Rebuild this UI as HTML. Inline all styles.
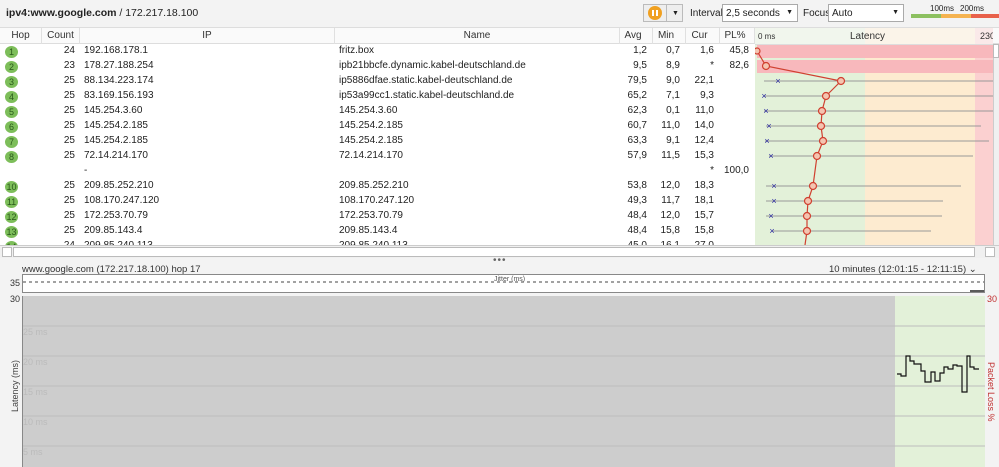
<!DOCTYPE html>
<html><head><meta charset="utf-8"><style>
*{margin:0;padding:0;box-sizing:border-box}
body{width:999px;height:467px;overflow:hidden;background:#fff;font-family:"Liberation Sans",sans-serif;font-size:10px;color:#222;position:relative}
.a{position:absolute;white-space:nowrap}
.r{text-align:right}
.hop{position:absolute;left:5px;width:13px;height:12px;border-radius:50%;background:#7dbe5a;color:#2a5a1a;font-size:9px;text-align:center;line-height:12px}
.hd{position:absolute;top:28px;height:16px;line-height:16px;border-right:1px solid #e0e0e0;text-align:center;color:#333}
</style></head><body>
<!-- toolbar -->
<div class="a" style="left:0;top:0;width:999px;height:28px;background:#f3f3f3;border-bottom:1px solid #ddd"></div>
<div class="a" style="left:6px;top:7px;font-size:10.5px"><b>ipv4:www.google.com</b> / 172.217.18.100</div>
<div class="a" style="left:643px;top:4px;width:40px;height:18px;border:1px solid #bbb;background:#eee"></div>
<div class="a" style="left:648px;top:6px;width:14px;height:14px;border-radius:50%;background:#f0a020"></div>
<div class="a" style="left:652px;top:10px;width:2px;height:6px;background:#fff"></div>
<div class="a" style="left:656px;top:10px;width:2px;height:6px;background:#fff"></div>
<div class="a" style="left:666px;top:5px;width:1px;height:16px;background:#bbb"></div>
<div class="a" style="left:672px;top:10px;font-size:7px">▼</div>
<div class="a" style="left:690px;top:8px">Interval</div>
<div class="a" style="left:722px;top:4px;width:76px;height:18px;border:1px solid #aaa;background:#fff;padding:3px 3px">2,5 seconds<span style="position:absolute;right:4px;top:4px;font-size:7px">▼</span></div>
<div class="a" style="left:803px;top:8px">Focus</div>
<div class="a" style="left:828px;top:4px;width:76px;height:18px;border:1px solid #aaa;background:#fff;padding:3px 3px">Auto<span style="position:absolute;right:4px;top:4px;font-size:7px">▼</span></div>
<div class="a" style="left:930px;top:4px;font-size:8px">100ms</div>
<div class="a" style="left:960px;top:4px;font-size:8px">200ms</div>
<div class="a" style="left:911px;top:14px;width:30px;height:4px;background:#8cc060"></div>
<div class="a" style="left:941px;top:14px;width:30px;height:4px;background:#f5b350"></div>
<div class="a" style="left:971px;top:14px;width:28px;height:4px;background:#e8604a"></div>
<!-- header -->
<div class="a" style="left:0;top:28px;width:999px;height:16px;background:#fafafa;border-bottom:1px solid #ddd"></div>
<div class="hd" style="left:0;width:42px">Hop</div>
<div class="hd" style="left:42px;width:38px">Count</div>
<div class="hd" style="left:80px;width:255px">IP</div>
<div class="hd" style="left:335px;width:285px">Name</div>
<div class="hd r" style="left:620px;width:33px;padding-right:6px">Avg</div>
<div class="hd r" style="left:653px;width:33px;padding-right:6px">Min</div>
<div class="hd r" style="left:686px;width:34px;padding-right:6px">Cur</div>
<div class="hd r" style="left:720px;width:35px;padding-right:4px">PL%</div>
<svg class="a" style="left:755px;top:28px" width="238" height="217">
<rect x="0" y="0" width="110" height="217" fill="#e3f1d9"/>
<rect x="110" y="0" width="110" height="217" fill="#fdebd0"/>
<rect x="220" y="0" width="18" height="217" fill="#fbd0d0"/>
<rect x="0" y="0" width="238" height="16" fill="#fafafa" opacity=".6"/>
<rect x="0" y="16" width="238" height="1" fill="#ddd"/>
<rect x="2" y="17" width="236" height="13" fill="#f8b8bc"/>
<rect x="2" y="32" width="236" height="13" fill="#f8b8bc"/>
<text x="3" y="11" font-size="8" fill="#333" font-family="Liberation Sans">0 ms</text>
<text x="95" y="11" font-size="10" fill="#333" font-family="Liberation Sans">Latency</text>
<text x="225" y="11" font-size="9" fill="#333" font-family="Liberation Sans">230</text>
<g stroke="#999" stroke-width="1">
<line x1="9" y1="53" x2="238" y2="53"/><line x1="9" y1="68" x2="238" y2="68"/>
<line x1="9" y1="83" x2="238" y2="83"/><line x1="11" y1="98" x2="226" y2="98"/>
<line x1="10" y1="113" x2="234" y2="113"/><line x1="14" y1="128" x2="218" y2="128"/>
<line x1="11" y1="158" x2="206" y2="158"/><line x1="11" y1="173" x2="188" y2="173"/>
<line x1="11" y1="188" x2="187" y2="188"/><line x1="17" y1="203" x2="176" y2="203"/>
</g>
<g fill="#2a2aa0" font-size="9" font-family="Liberation Sans" text-anchor="middle">
<text x="23" y="56">×</text><text x="9" y="71">×</text><text x="11" y="86">×</text><text x="14" y="101">×</text><text x="12" y="116">×</text><text x="16" y="131">×</text><text x="19" y="161">×</text><text x="19" y="176">×</text><text x="16" y="191">×</text><text x="17" y="206">×</text>
</g>
<polyline fill="none" stroke="#d04030" stroke-width="1.2" points="2,23 11,38 86,53 71,68 67,83 66,98 68,113 62,128 58,158 53,173 52,188 52,203 50,217"/>
<g fill="#f4c4b0" stroke="#d04030" stroke-width="1.2">
<circle cx="2" cy="23" r="3"/><circle cx="11" cy="38" r="3.5"/><circle cx="86" cy="53" r="3.5"/><circle cx="71" cy="68" r="3.5"/><circle cx="67" cy="83" r="3.5"/><circle cx="66" cy="98" r="3.5"/><circle cx="68" cy="113" r="3.5"/><circle cx="62" cy="128" r="3.5"/><circle cx="58" cy="158" r="3.5"/><circle cx="53" cy="173" r="3.5"/><circle cx="52" cy="188" r="3.5"/><circle cx="52" cy="203" r="3.5"/>
</g>
</svg>
<div class="a" style="left:993px;top:44px;width:6px;height:201px;background:#f0f0f0;border-left:1px solid #ccc"></div>
<div class="a" style="left:993px;top:44px;width:6px;height:14px;background:#fff;border:1px solid #bbb"></div>

<div id="rows"></div>
<!-- h scrollbar -->
<div class="a" style="left:0;top:245px;width:999px;height:13px;background:#f0f0f0;border-top:1px solid #ccc"></div>
<div class="a" style="left:2px;top:247px;width:10px;height:10px;border:1px solid #bbb;background:#fff"></div>
<div class="a" style="left:13px;top:247px;width:962px;height:10px;border:1px solid #bbb;background:#fff"></div>
<div class="a" style="left:985px;top:247px;width:10px;height:10px;border:1px solid #bbb;background:#fff"></div>
<!-- lower panel -->
<div class="a" style="left:0;top:258px;width:999px;height:209px;background:#f3f3f3"></div>
<div class="a" style="left:493px;top:255px;font-size:10px;color:#666;letter-spacing:1px">•••</div>
<div class="a" style="left:22px;top:264px;font-size:9.5px;color:#333">www.google.com (172.217.18.100) hop 17</div>
<div class="a" style="left:829px;top:264px;font-size:9.5px;color:#333">10 minutes (12:01:15 - 12:11:15) ⌄</div>
<svg class="a" style="left:0;top:272px" width="999" height="195">
<rect x="22.5" y="2.5" width="962" height="18" fill="#fff" stroke="#888"/>
<line x1="23" y1="10" x2="984" y2="10" stroke="#444" stroke-dasharray="3,3"/>
<line x1="970" y1="19" x2="984" y2="19" stroke="#222" stroke-width="1.5"/>
<text x="494" y="9" font-size="7" fill="#555" font-family="Liberation Sans">Jitter (ms)</text>
<text x="10" y="14" font-size="9" fill="#333" font-family="Liberation Sans">35</text>
<text x="10" y="30" font-size="9" fill="#333" font-family="Liberation Sans">30</text>
<text x="987" y="30" font-size="9" fill="#c03030" font-family="Liberation Sans">30</text>
<rect x="23" y="24" width="872" height="171" fill="#cdcdcd"/>
<rect x="895" y="24" width="90" height="171" fill="#e3f1d9"/>
<line x1="22.5" y1="24" x2="22.5" y2="195" stroke="#888"/>
<g stroke="#bdbdbd"><line x1="23" y1="54" x2="985" y2="54"/><line x1="23" y1="84" x2="985" y2="84"/><line x1="23" y1="114" x2="985" y2="114"/><line x1="23" y1="144" x2="985" y2="144"/><line x1="23" y1="174" x2="985" y2="174"/></g>
<g font-size="9" fill="#bbb" font-family="Liberation Sans"><text x="23" y="63">25 ms</text><text x="23" y="93">20 ms</text><text x="23" y="123">15 ms</text><text x="23" y="153">10 ms</text><text x="23" y="183">5 ms</text></g>
<polyline fill="none" stroke="#111" stroke-width="1.2" points="897,102 901,102 901,104 906,104 906,84 910,84 910,89 914,89 914,92 921,92 921,99 925,99 925,110 931,110 931,100 935,100 935,109 940,109 940,101 944,101 944,95 948,95 948,97 953,97 953,93 957,93 957,94 962,94 962,120 967,120 967,84 970,84 970,95 974,95 974,97 979,97"/>
<text transform="translate(18,140) rotate(-90)" font-size="9" fill="#444" font-family="Liberation Sans">Latency (ms)</text>
<text transform="translate(988,90) rotate(90)" font-size="9" fill="#c03030" font-family="Liberation Sans">Packet Loss %</text>
</svg>
<script>
var R=[[1,24,"192.168.178.1","fritz.box","1,2","0,7","1,6","45,8"],
[2,23,"178.27.188.254","ipb21bbcfe.dynamic.kabel-deutschland.de","9,5","8,9","*","82,6"],
[3,25,"88.134.223.174","ip5886dfae.static.kabel-deutschland.de","79,5","9,0","22,1",""],
[4,25,"83.169.156.193","ip53a99cc1.static.kabel-deutschland.de","65,2","7,1","9,3",""],
[5,25,"145.254.3.60","145.254.3.60","62,3","0,1","11,0",""],
[6,25,"145.254.2.185","145.254.2.185","60,7","11,0","14,0",""],
[7,25,"145.254.2.185","145.254.2.185","63,3","9,1","12,4",""],
[8,25,"72.14.214.170","72.14.214.170","57,9","11,5","15,3",""],
[0,"","-","","","","*","100,0"],
[10,25,"209.85.252.210","209.85.252.210","53,8","12,0","18,3",""],
[11,25,"108.170.247.120","108.170.247.120","49,3","11,7","18,1",""],
[12,25,"172.253.70.79","172.253.70.79","48,4","12,0","15,7",""],
[13,25,"209.85.143.4","209.85.143.4","48,4","15,8","15,8",""],
[14,24,"209.85.240.113","209.85.240.113","45,0","16,1","27,0",""]];
var h="";
R.forEach(function(r,i){var y=45+i*15;
if(r[0])h+='<div class="hop" style="top:'+(y+1)+'px">'+r[0]+'</div>';
h+='<div class="a r" style="left:42px;width:33px;top:'+y+'px">'+r[1]+'</div>';
h+='<div class="a" style="left:84px;top:'+y+'px">'+r[2]+'</div>';
h+='<div class="a" style="left:339px;top:'+y+'px">'+r[3]+'</div>';
h+='<div class="a r" style="left:620px;width:27px;top:'+y+'px">'+r[4]+'</div>';
h+='<div class="a r" style="left:653px;width:27px;top:'+y+'px">'+r[5]+'</div>';
h+='<div class="a r" style="left:686px;width:28px;top:'+y+'px">'+r[6]+'</div>';
h+='<div class="a r" style="left:720px;width:29px;top:'+y+'px">'+r[7]+'</div>';});
document.getElementById("rows").innerHTML=h;
</script>
</body></html>
